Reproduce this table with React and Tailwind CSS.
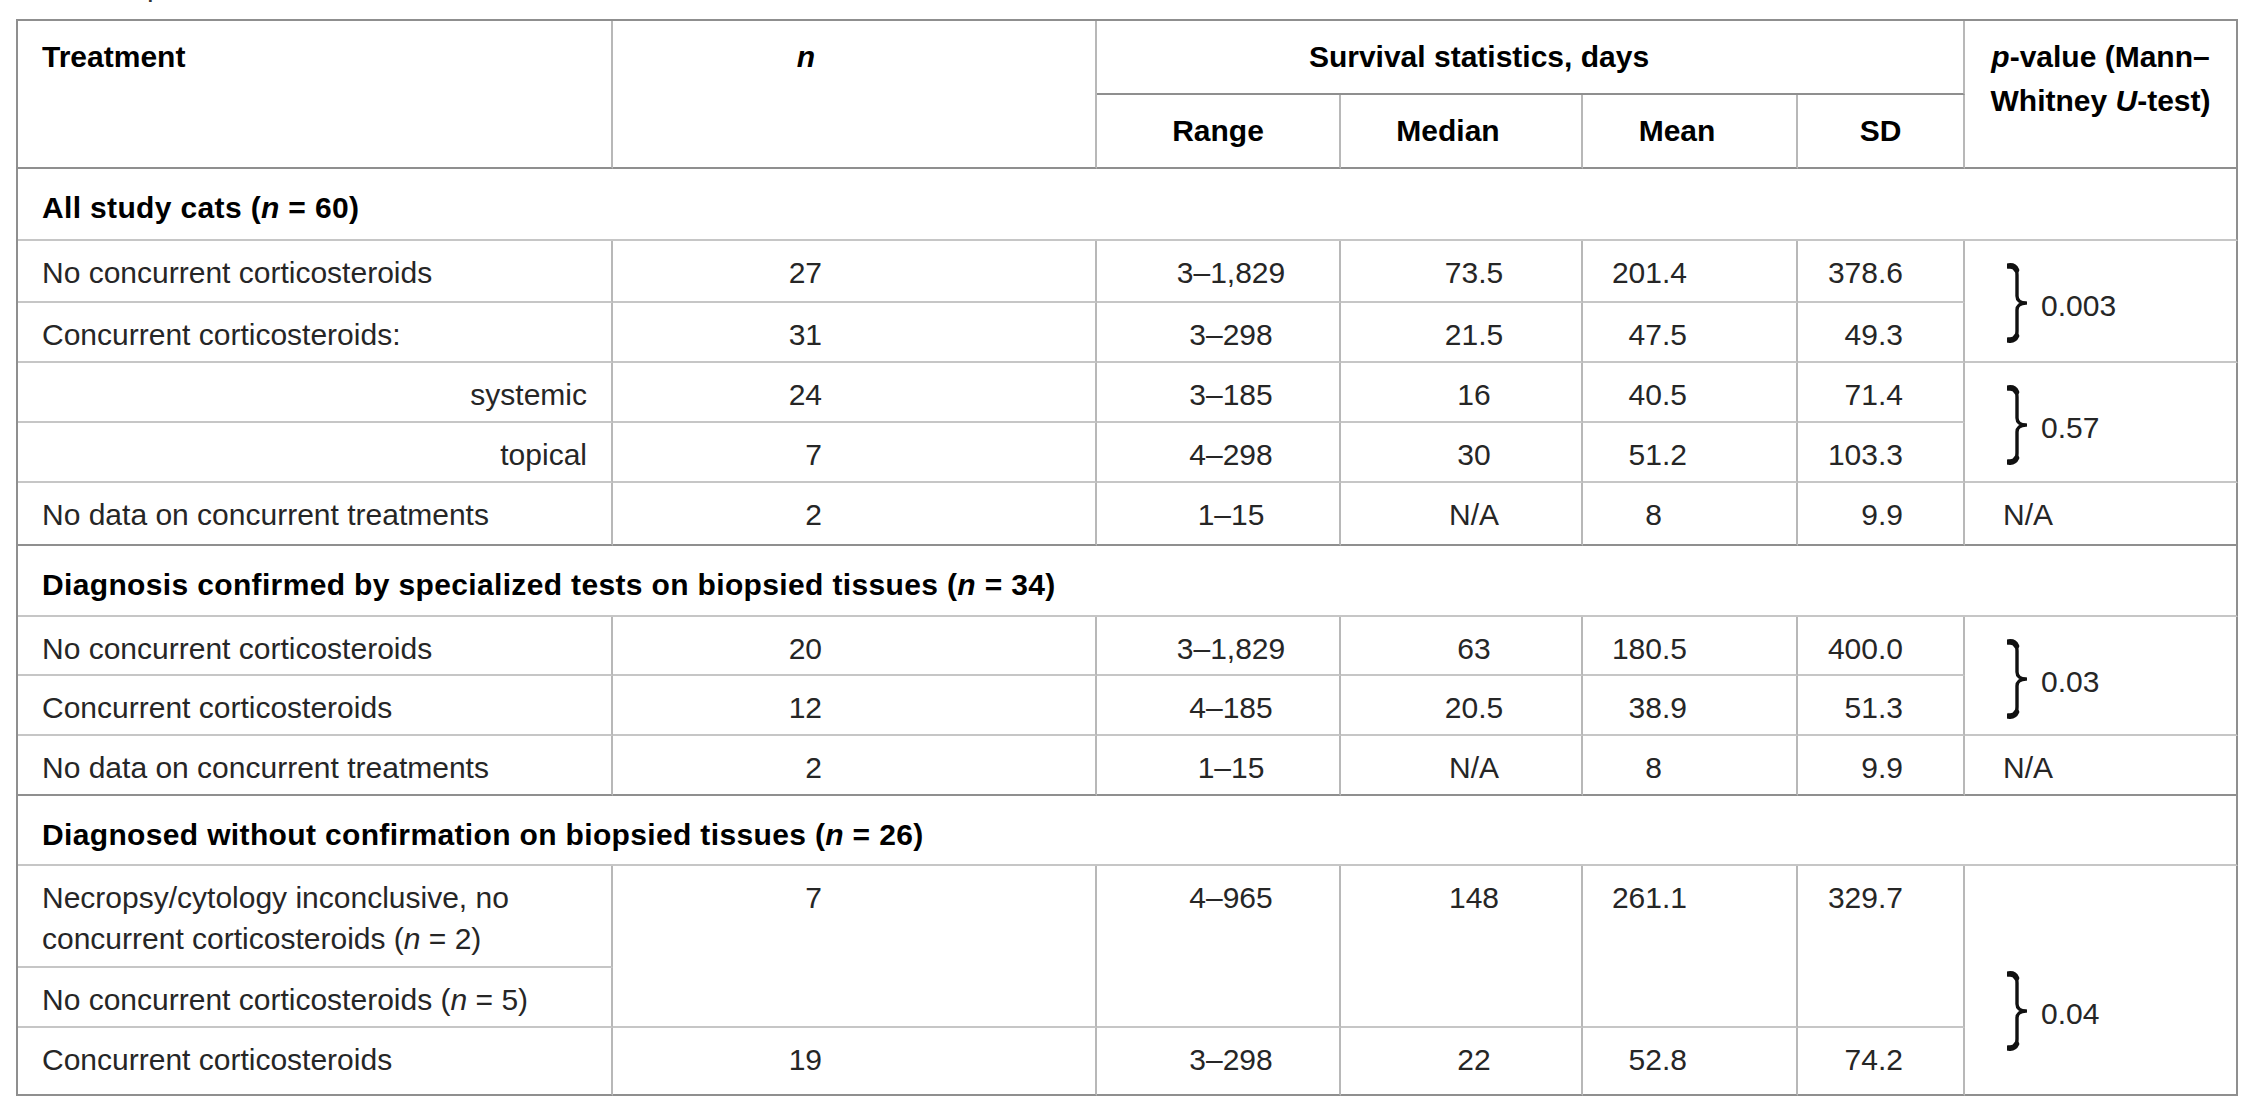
import React from 'react'

// survival table — cats, concurrent corticosteroids
const FONT = "font-['Liberation_Sans',Arial,sans-serif]"

function Brace({ className = '' }) {
  return (
    <svg width="20" height="80" viewBox="0 0 20 80" className={className}>
      <path d="M2 3 C8 3 10 5 10 12 L10 33 C10 37 13 40 19 40 C13 40 10 43 10 47 L10 68 C10 75 8 77 2 77"
        fill="none" stroke="#111" strokeWidth="3.4" strokeLinejoin="round" />
      <path d="M1.5 3 C5 2.5 8 3.5 9.5 7" fill="none" stroke="#111" strokeWidth="5.5" strokeLinecap="round" />
      <path d="M1.5 77 C5 77.5 8 76.5 9.5 73" fill="none" stroke="#111" strokeWidth="5.5" strokeLinecap="round" />
    </svg>
  )
}

function Cell({ children, className = '', dark = false, edge = false }) {
  return (
    <div className={`border-r-2 border-b-2 ${edge ? 'border-r-[#8f8f8f]' : 'border-r-[#b8b8b8]'} ${dark ? 'border-b-[#8f8f8f]' : 'border-b-[#c6c6c6]'} ${className}`}>
      {children}
    </div>
  )
}

function Mean({ v }) {
  if (v.includes('.')) return v
  return <>{v}<span className="invisible">.0</span></>
}

function PCell({ p, className = '', dark = false, pad = 'pt-[22px]' }) {
  if (!p) return null
  if (p.brace) {
    return (
      <Cell edge dark={dark} className={className}>
        <div className={`flex items-center pl-[42px] gap-[14px] ${pad}`}>
          <Brace />
          <span className="pt-[4px]">{p.brace}</span>
        </div>
      </Cell>
    )
  }
  return <Cell edge dark={dark} className={`pt-[11px] pl-[38px] ${className}`}>{p.text}</Cell>
}

function DataRow({ r, dark }) {
  return (
    <>
      <Cell dark={dark} className={`pt-[11px] ${r.right ? 'text-right pr-[24px]' : 'pl-[24px]'}`}>{r.label}</Cell>
      <Cell dark={dark} className="pt-[11px] text-right pr-[273px]">{r.n}</Cell>
      <Cell dark={dark} className="pt-[11px] text-center pl-[26px]">{r.range}</Cell>
      <Cell dark={dark} className="pt-[11px] text-center pl-[26px]">{r.median}</Cell>
      <Cell dark={dark} className="pt-[11px] text-right pr-[109px]"><Mean v={r.mean} /></Cell>
      <Cell dark={dark} className="pt-[11px] text-right pr-[60px]">{r.sd}</Cell>
      <PCell p={r.p} dark={dark} className={r.p?.span === 2 ? 'row-span-2' : ''} />
    </>
  )
}

function Section({ children, dark = false }) {
  return (
    <Cell edge dark={dark} className="col-span-7 pt-[18px] pl-[24px] font-bold text-black tracking-[0.35px]">
      {children}
    </Cell>
  )
}

const allCats = [
  { label: 'No concurrent corticosteroids', n: '27', range: '3–1,829', median: '73.5', mean: '201.4', sd: '378.6', p: { brace: '0.003', span: 2 } },
  { label: 'Concurrent corticosteroids:', n: '31', range: '3–298', median: '21.5', mean: '47.5', sd: '49.3' },
  { label: 'systemic', right: true, n: '24', range: '3–185', median: '16', mean: '40.5', sd: '71.4', p: { brace: '0.57', span: 2 } },
  { label: 'topical', right: true, n: '7', range: '4–298', median: '30', mean: '51.2', sd: '103.3' },
  { label: 'No data on concurrent treatments', n: '2', range: '1–15', median: 'N/A', mean: '8', sd: '9.9', p: { text: 'N/A' } },
]

const confirmed = [
  { label: 'No concurrent corticosteroids', n: '20', range: '3–1,829', median: '63', mean: '180.5', sd: '400.0', p: { brace: '0.03', span: 2 } },
  { label: 'Concurrent corticosteroids', n: '12', range: '4–185', median: '20.5', mean: '38.9', sd: '51.3' },
  { label: 'No data on concurrent treatments', n: '2', range: '1–15', median: 'N/A', mean: '8', sd: '9.9', p: { text: 'N/A' } },
]

export default function App() {
  return (
    <div className={`${FONT} bg-white w-[2256px] h-[1119px] text-[30px] leading-[41px] text-[#262626]`}>
      {/* cut-off caption line above the table */}
      <div className="h-[19px] overflow-hidden pl-[147px]">
        <div className="-mt-[29px] leading-[30px] text-[#333]">p</div>
      </div>

      <div className="ml-[16px] w-[2222px] border-l-2 border-t-2 border-[#8f8f8f] grid grid-cols-[595px_484px_244px_242px_215px_167px_273px] grid-rows-[74px_74px_72px_62px_60px_60px_60px_63px_71px_59px_60px_60px_70px_102px_60px_68px]">
        {/* header */}
        <Cell dark className="row-span-2 pt-[15px] pl-[24px] font-bold text-black">Treatment</Cell>
        <Cell dark className="row-span-2 pt-[15px] text-right pr-[280px] font-bold italic text-black">n</Cell>
        <Cell dark className="col-span-4 pt-[15px] text-center pr-[102px] font-bold text-black">Survival statistics, days</Cell>
        <Cell dark edge className="row-span-2 pt-[14px] text-center leading-[44px] font-bold text-black">
          <i>p</i>-value (Mann–<br />Whitney <i>U</i>-test)
        </Cell>
        <Cell dark className="pt-[15px] text-center font-bold text-black">Range</Cell>
        <Cell dark className="pt-[15px] text-center pr-[26px] font-bold text-black">Median</Cell>
        <Cell dark className="pt-[15px] text-center pr-[25px] font-bold text-black">Mean</Cell>
        <Cell dark className="pt-[15px] text-center font-bold text-black">SD</Cell>

        {/* all study cats */}
        <Section>All study cats (<i>n</i> = 60)</Section>
        {allCats.map((r, i) => (
          <DataRow key={i} r={r} dark={i === allCats.length - 1} />
        ))}

        {/* confirmed by specialized tests */}
        <Section>Diagnosis confirmed by specialized tests on biopsied tissues (<i>n</i> = 34)</Section>
        {confirmed.map((r, i) => (
          <DataRow key={i} r={r} dark={i === confirmed.length - 1} />
        ))}

        {/* without confirmation */}
        <Section>Diagnosed without confirmation on biopsied tissues (<i>n</i> = 26)</Section>
        <Cell className="pt-[11px] pl-[24px]">
          Necropsy/cytology inconclusive, no<br />concurrent corticosteroids (<i>n</i> = 2)
        </Cell>
        <Cell className="row-span-2 pt-[11px] text-right pr-[273px]">7</Cell>
        <Cell className="row-span-2 pt-[11px] text-center pl-[26px]">4–965</Cell>
        <Cell className="row-span-2 pt-[11px] text-center pl-[26px]">148</Cell>
        <Cell className="row-span-2 pt-[11px] text-right pr-[109px]">261.1</Cell>
        <Cell className="row-span-2 pt-[11px] text-right pr-[60px]">329.7</Cell>
        <PCell p={{ brace: '0.04' }} dark className="row-span-3" pad="pt-[105px]" />
        <Cell className="pt-[11px] pl-[24px]">No concurrent corticosteroids (<i>n</i> = 5)</Cell>
        <Cell dark className="pt-[11px] pl-[24px]">Concurrent corticosteroids</Cell>
        <Cell dark className="pt-[11px] text-right pr-[273px]">19</Cell>
        <Cell dark className="pt-[11px] text-center pl-[26px]">3–298</Cell>
        <Cell dark className="pt-[11px] text-center pl-[26px]">22</Cell>
        <Cell dark className="pt-[11px] text-right pr-[109px]">52.8</Cell>
        <Cell dark className="pt-[11px] text-right pr-[60px]">74.2</Cell>
      </div>
    </div>
  )
}
